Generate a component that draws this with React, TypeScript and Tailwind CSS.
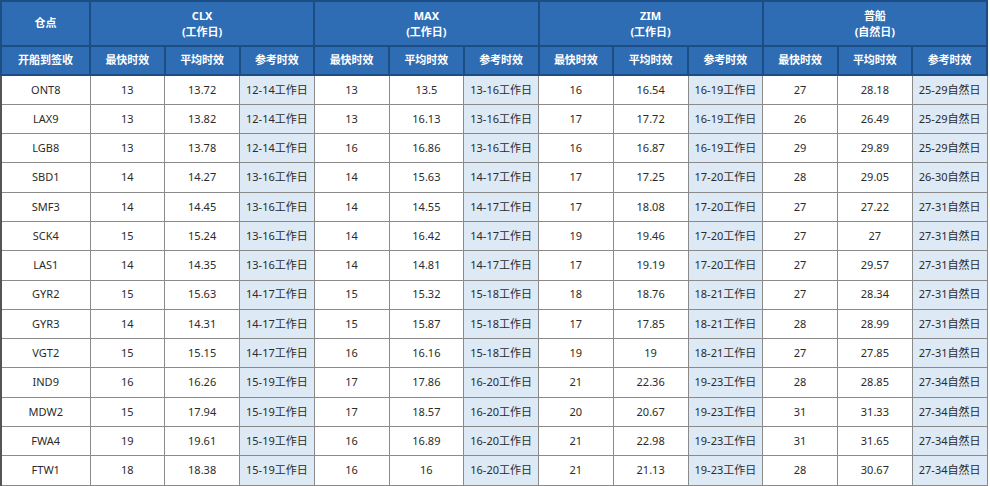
const groups = [
  { name: 'CLX', unit: '(工作日)' },
  { name: 'MAX', unit: '(工作日)' },
  { name: 'ZIM', unit: '(工作日)' },
  { name: '普船', unit: '(自然日)' },
];

const rows: [string, ...(string | number)[]][] = [
  ['ONT8', 13, '13.72', '12-14工作日', 13, '13.5', '13-16工作日', 16, '16.54', '16-19工作日', 27, '28.18', '25-29自然日'],
  ['LAX9', 13, '13.82', '12-14工作日', 13, '16.13', '13-16工作日', 17, '17.72', '16-19工作日', 26, '26.49', '25-29自然日'],
  ['LGB8', 13, '13.78', '12-14工作日', 16, '16.86', '13-16工作日', 16, '16.87', '16-19工作日', 29, '29.89', '25-29自然日'],
  ['SBD1', 14, '14.27', '13-16工作日', 14, '15.63', '14-17工作日', 17, '17.25', '17-20工作日', 28, '29.05', '26-30自然日'],
  ['SMF3', 14, '14.45', '13-16工作日', 14, '14.55', '14-17工作日', 17, '18.08', '17-20工作日', 27, '27.22', '27-31自然日'],
  ['SCK4', 15, '15.24', '13-16工作日', 14, '16.42', '14-17工作日', 19, '19.46', '17-20工作日', 27, '27', '27-31自然日'],
  ['LAS1', 14, '14.35', '13-16工作日', 14, '14.81', '14-17工作日', 17, '19.19', '17-20工作日', 27, '29.57', '27-31自然日'],
  ['GYR2', 15, '15.63', '14-17工作日', 15, '15.32', '15-18工作日', 18, '18.76', '18-21工作日', 27, '28.34', '27-31自然日'],
  ['GYR3', 14, '14.31', '14-17工作日', 15, '15.87', '15-18工作日', 17, '17.85', '18-21工作日', 28, '28.99', '27-31自然日'],
  ['VGT2', 15, '15.15', '14-17工作日', 16, '16.16', '15-18工作日', 19, '19', '18-21工作日', 27, '27.85', '27-31自然日'],
  ['IND9', 16, '16.26', '15-19工作日', 17, '17.86', '16-20工作日', 21, '22.36', '19-23工作日', 28, '28.85', '27-34自然日'],
  ['MDW2', 15, '17.94', '15-19工作日', 17, '18.57', '16-20工作日', 20, '20.67', '19-23工作日', 31, '31.33', '27-34自然日'],
  ['FWA4', 19, '19.61', '15-19工作日', 16, '16.89', '16-20工作日', 21, '22.98', '19-23工作日', 31, '31.65', '27-34自然日'],
  ['FTW1', 18, '18.38', '15-19工作日', 16, '16', '16-20工作日', 21, '21.13', '19-23工作日', 28, '30.67', '27-34自然日'],
];

const subHeads = ['最快时效', '平均时效', '参考时效'];

export default function App() {
  return (
    <div className="w-[990px] h-[486px] bg-white overflow-hidden font-['Noto_Sans','Noto_Sans_CJK_SC',sans-serif]">
      <table className="w-[988px] table-fixed border-collapse text-[11px] text-[#2b2b2b]">
        <colgroup>
          <col className="w-[89px]" />
          {Array.from({ length: 12 }).map((_, i) => (
            <col key={i} />
          ))}
        </colgroup>
        <thead className="bg-[#2e6db4] text-white font-bold">
          <tr className="h-[45px]">
            <th className="border-2 border-[#1d4d85] font-bold">仓点</th>
            {groups.map((g) => (
              <th key={g.name} colSpan={3} className="border-2 border-[#1d4d85] font-bold leading-[16px]">
                <div>{g.name}</div>
                <div>{g.unit}</div>
              </th>
            ))}
          </tr>
          <tr className="h-[29px]">
            <th className="border-2 border-[#1d4d85] font-bold">开船到签收</th>
            {groups.map((g) =>
              subHeads.map((s) => (
                <th key={g.name + s} className="border-2 border-[#1d4d85] font-bold">
                  {s}
                </th>
              ))
            )}
          </tr>
        </thead>
        <tbody>
          {rows.map((r) => (
            <tr key={r[0]} className="h-[29.3px]">
              {r.map((c, i) => (
                <td
                  key={i}
                  className={
                    'border border-[#8a8a8a] text-center ' +
                    (i > 0 && i % 3 === 0 ? 'bg-[#dde9f5]' : '') +
                    (i === 0 ? ' border-l-2 border-l-[#555]' : '')
                  }
                >
                  {c}
                </td>
              ))}
            </tr>
          ))}
        </tbody>
      </table>
    </div>
  );
}
